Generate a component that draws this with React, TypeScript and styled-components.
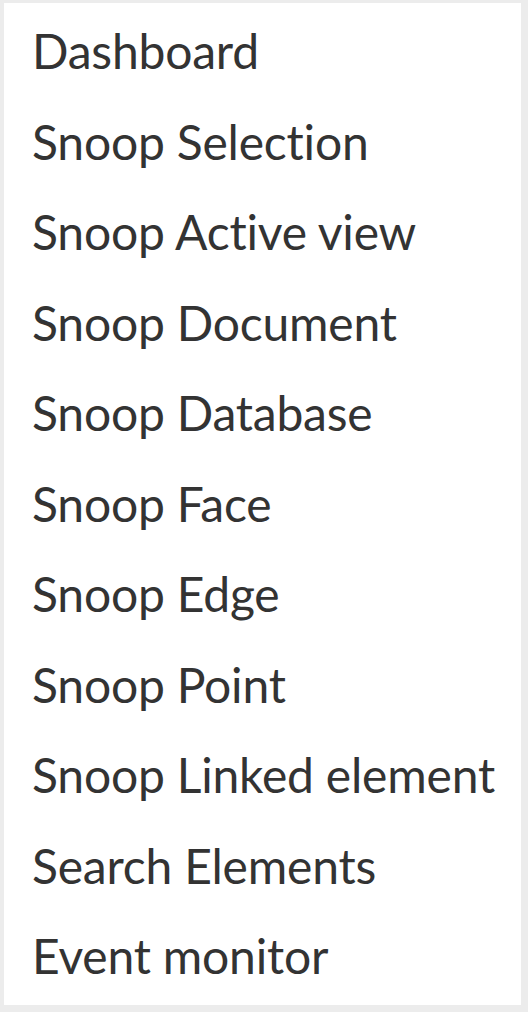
import React from 'react'
import styled, { createGlobalStyle } from 'styled-components'

const GlobalStyle = createGlobalStyle`
  html, body {
    margin: 0;
    padding: 0;
    background: #ececec;
  }
`

const Menu = styled.ul`
  list-style: none;
  margin: 3px 7px 0 4px;
  padding: 3px 0 0;
  height: 1002px;
  box-sizing: border-box;
  background: #ffffff;
  font-family: 'Lato', 'Noto Sans', sans-serif;
`

const Item = styled.li`
  height: 90.5px;
  line-height: 90.5px;
  padding-left: 28px;
  font-size: 48px;
  letter-spacing: -0.2px;
  color: #333333;
  white-space: nowrap;
  cursor: default;
`

const items = [
  'Dashboard',
  'Snoop Selection',
  'Snoop Active view',
  'Snoop Document',
  'Snoop Database',
  'Snoop Face',
  'Snoop Edge',
  'Snoop Point',
  'Snoop Linked element',
  'Search Elements',
  'Event monitor'
]

export default function App() {
  return (
    <>
      <GlobalStyle />
      <Menu>
        {items.map(label => (
          <Item key={label}>{label}</Item>
        ))}
      </Menu>
    </>
  )
}
